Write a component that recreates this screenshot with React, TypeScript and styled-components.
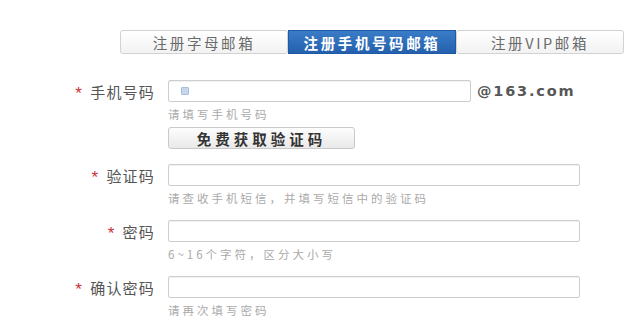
import styled, { createGlobalStyle } from "styled-components";

const GlobalStyle = createGlobalStyle`
  html, body {
    margin: 0;
    padding: 0;
    background: #fff;
  }
  body {
    font-family: "Noto Sans CJK SC", "Liberation Sans", sans-serif;
    color: #444;
  }
`;

const Page = styled.div`
  width: 640px;
  height: 320px;
  overflow: hidden;
  padding-top: 30px;
  box-sizing: border-box;
`;

const Tabs = styled.div`
  display: flex;
  margin-left: 120px;
`;

const Tab = styled.div<{ $active?: boolean }>`
  width: 168px;
  height: 24px;
  box-sizing: border-box;
  display: flex;
  align-items: center;
  justify-content: center;
  font-size: 14.5px;
  letter-spacing: 2.6px;
  font-weight: ${({ $active }) => ($active ? 700 : 400)};
  color: ${({ $active }) => ($active ? "#fff" : "#6a6a6a")};
  border: 1px solid ${({ $active }) => ($active ? "#1f5aa6" : "#d2d2d2")};
  border-radius: ${({ $active }) => ($active ? "0" : "3px")};
  background: ${({ $active }) =>
    $active
      ? "linear-gradient(#3a7cc7, #2460ad)"
      : "linear-gradient(#ffffff, #f2f2f2)"};
`;

const Form = styled.div`
  display: grid;
  grid-template-columns: 155px auto;
  column-gap: 13px;
  margin-top: 26px;
`;

const Label = styled.div`
  height: 22px;
  display: flex;
  align-items: center;
  justify-content: flex-end;
  font-size: 15px;
  letter-spacing: 1.2px;
  color: #555;
  white-space: nowrap;
`;

const Star = styled.span`
  color: #c8323a;
  font-family: "Liberation Sans", sans-serif;
  font-size: 17px;
  line-height: 1;
  padding-top: 5px;
  margin-right: 7px;
`;

const Field = styled.div`
  display: flex;
  flex-direction: column;
  align-items: flex-start;
  padding-bottom: 15px;
`;

const Line = styled.div`
  display: flex;
  align-items: center;
`;

const InputBox = styled.div<{ $width: number }>`
  position: relative;
  width: ${({ $width }) => $width}px;
  height: 22px;
  box-sizing: border-box;
  border: 1px solid #cdcdcd;
  border-radius: 2px;
  background: #fff;
  box-shadow: inset 0 1px 1px rgba(0, 0, 0, 0.06);
`;

const InputIcon = styled.span`
  position: absolute;
  left: 12px;
  top: 6px;
  width: 8px;
  height: 8px;
  border-radius: 1px;
  background: #c7d6ec;
  border: 1px solid #a9bfe0;
  box-sizing: border-box;
`;

const Suffix = styled.span`
  margin-left: 6px;
  font-family: "DejaVu Sans", sans-serif;
  font-weight: 700;
  font-size: 14.5px;
  letter-spacing: 1.8px;
  color: #575757;
`;

const Hint = styled.div`
  margin-top: 5px;
  height: 14px;
  line-height: 14px;
  font-size: 11.5px;
  letter-spacing: 3px;
  color: #aaa;
  white-space: nowrap;
`;

const CodeButton = styled.div`
  margin-top: 6px;
  width: 187px;
  height: 22px;
  box-sizing: border-box;
  display: flex;
  align-items: center;
  justify-content: center;
  border: 1px solid #c9c9c9;
  border-radius: 3px;
  background: linear-gradient(#fdfdfd, #e9e9e9);
  font-size: 14.5px;
  font-weight: 700;
  letter-spacing: 4px;
  color: #333;
`;

type Row = {
  label: string;
  hint: string;
  width: number;
};

const rows: Row[] = [
  { label: "验证码", hint: "请查收手机短信，并填写短信中的验证码", width: 412 },
  { label: "密码", hint: "6~16个字符，区分大小写", width: 412 },
  { label: "确认密码", hint: "请再次填写密码", width: 412 },
];

export default function App() {
  return (
    <>
      <GlobalStyle />
      <Page>
        <Tabs>
          <Tab>注册字母邮箱</Tab>
          <Tab $active>注册手机号码邮箱</Tab>
          <Tab>注册VIP邮箱</Tab>
        </Tabs>
        <Form>
          <Label>
            <Star>*</Star>手机号码
          </Label>
          <Field>
            <Line>
              <InputBox $width={303}>
                <InputIcon />
              </InputBox>
              <Suffix>@163.com</Suffix>
            </Line>
            <Hint>请填写手机号码</Hint>
            <CodeButton>免费获取验证码</CodeButton>
          </Field>
          {rows.map((row) => (
            <>
              <Label key={row.label + "-l"}>
                <Star>*</Star>
                {row.label}
              </Label>
              <Field key={row.label + "-f"}>
                <InputBox $width={row.width} />
                <Hint>{row.hint}</Hint>
              </Field>
            </>
          ))}
        </Form>
      </Page>
    </>
  );
}
